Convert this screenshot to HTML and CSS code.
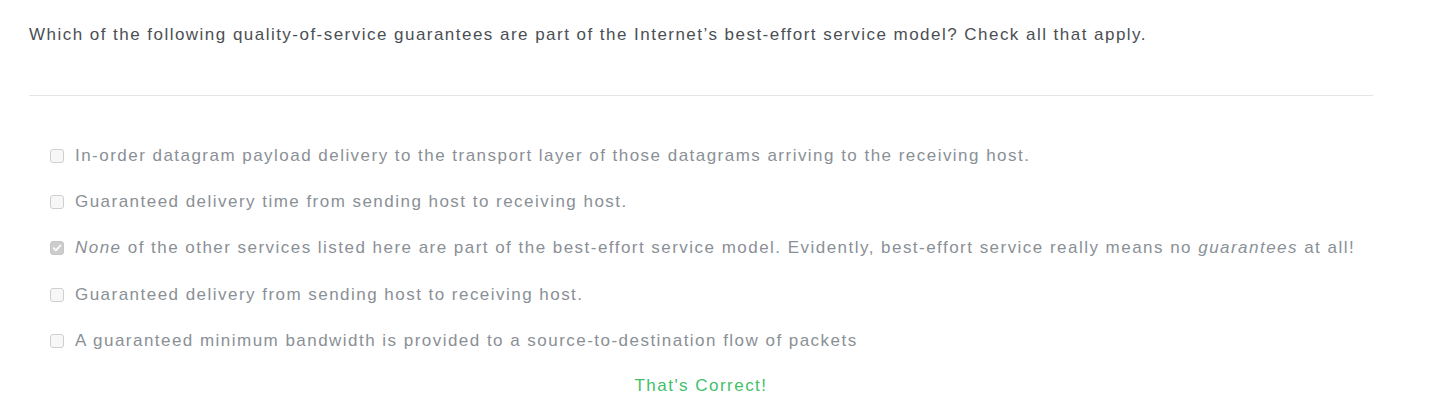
FILE: index.html
```html
<!DOCTYPE html>
<html>
<head>
<meta charset="utf-8">
<link rel="stylesheet" href="styles.css">
</head>
<body>
<div class="quiz">
  <p class="question">Which of the following quality-of-service guarantees are part of the Internet’s best-effort service model? Check all that apply.</p>
  <hr class="divider">
  <ul class="options">
    <li class="option"><span class="box"></span><span class="label">In-order datagram payload delivery to the transport layer of those datagrams arriving to the receiving host.</span></li>
    <li class="option"><span class="box"></span><span class="label">Guaranteed delivery time from sending host to receiving host.</span></li>
    <li class="option"><span class="box checked"><svg viewBox="0 0 16 16" width="12" height="12"><path d="M3.5 8.2 L6.6 11.2 L12.5 4.6" fill="none" stroke="#ffffff" stroke-width="2.2" stroke-linecap="round" stroke-linejoin="round"/></svg></span><span class="label"><em>None</em> of the other services listed here are part of the best-effort service model. Evidently, best-effort service really means no <em>guarantees</em> at all!</span></li>
    <li class="option"><span class="box"></span><span class="label">Guaranteed delivery from sending host to receiving host.</span></li>
    <li class="option"><span class="box"></span><span class="label">A guaranteed minimum bandwidth is provided to a source-to-destination flow of packets</span></li>
  </ul>
  <p class="result">That's Correct!</p>
</div>
</body>
</html>
```
FILE: styles.css
```css
html, body {
  margin: 0;
  padding: 0;
  background: #ffffff;
}
body {
  font-family: "Liberation Sans", Arial, sans-serif;
  font-size: 17px;
  letter-spacing: 1.47px;
}
.quiz {
  width: 1344px;
  padding: 0 0 0 29px;
}
.question {
  margin: 0;
  padding-top: 25px;
  line-height: 20px;
  color: #4b4f54;
}
.divider {
  margin: 50px 0 0 0;
  border: 0;
  border-top: 1px solid #e5e5e5;
  height: 0;
}
.options {
  list-style: none;
  margin: 0;
  padding: 50px 0 0 21px;
}
.option {
  display: flex;
  align-items: center;
  gap: 11px;
  height: 20px;
  margin-bottom: 26.2px;
  color: #8a9096;
}
.box {
  width: 14px;
  height: 14px;
  box-sizing: border-box;
  border: 1px solid #cfcfcf;
  border-radius: 3px;
  background: #f7f7f7;
  display: flex;
  align-items: center;
  justify-content: center;
  flex: none;
}
.box.checked {
  background: #cdcdcd;
  border-color: #c6c6c6;
}
.box svg {
  width: 12px;
  height: 12px;
}
.label em {
  font-style: italic;
}
.result {
  margin: -0.5px 0 0 0;
  text-align: center;
  color: #3fbf6a;
  line-height: 20px;
}
```
